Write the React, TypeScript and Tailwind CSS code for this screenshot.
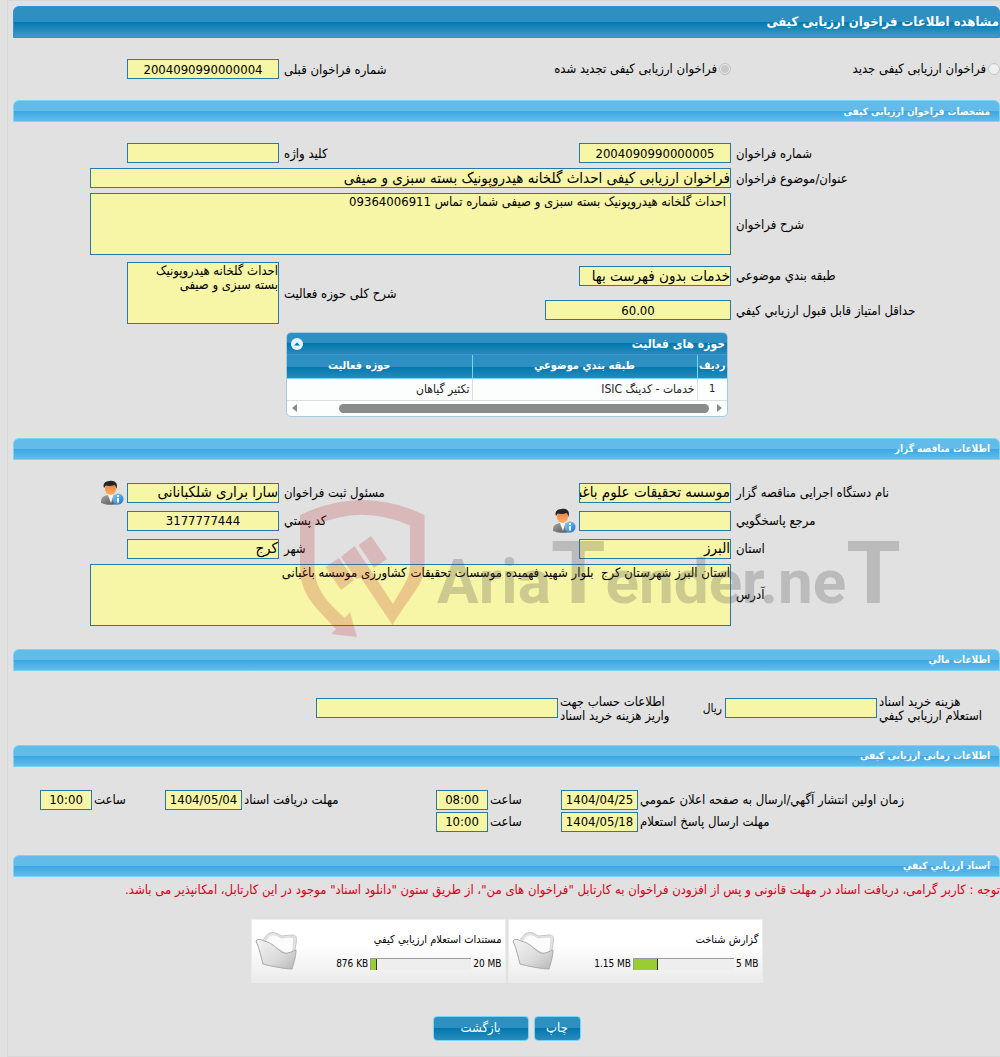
import { useId } from "react";
import type { ReactNode } from "react";

const fieldClass =
  "block border border-[#2779aa] bg-[#f7f5a6] text-black outline-none rounded-none";

const rowClass =
  "grid grid-cols-[269px_152px_minmax(0,1fr)_152px_114px] items-center";

const timeRowClass =
  "grid grid-cols-[362px_77px_73px_52px_minmax(0,1fr)_77px_73px_52px_27px] items-center";

function SectionBar({ title }: { title: string }) {
  return (
    <h2 className="flex h-[22px] items-center rounded-t-md border border-[#77d5f7] bg-[linear-gradient(#63bbea_0%,#63bbea_50%,#39a7e2_50%,#62bcec_100%)] pr-[9px] text-[10px] font-bold text-white">
      {title}
    </h2>
  );
}

function Label({ id, children }: { id: string; children: ReactNode }) {
  return (
    <label htmlFor={id} className="pt-px pl-[5px] text-left text-[13px] leading-[14px] whitespace-nowrap">
      {children}
    </label>
  );
}

function TightLabel({ id, children }: { id: string; children: ReactNode }) {
  return (
    <label htmlFor={id} className="pt-px pl-[2px] text-left text-[13px] leading-[14px] whitespace-nowrap">
      {children}
    </label>
  );
}

function Field({ id, value = "", number }: { id: string; value?: string; number?: boolean }) {
  return (
    <input
      id={id}
      type="text"
      readOnly
      defaultValue={value}
      className={`${fieldClass} h-5 w-full ${number ? "text-center text-[13px]" : "text-right text-[15px]"}`}
    />
  );
}

function Area({ id, value, padded }: { id: string; value: string; padded?: boolean }) {
  return (
    <textarea
      id={id}
      readOnly
      defaultValue={value}
      className={`${fieldClass} h-[62px] w-full resize-none overflow-hidden text-[13px] leading-[14px] ${padded ? "px-1 py-px" : "py-px"}`}
    />
  );
}

function PersonInfoIcon() {
  return (
    <svg width="24" height="26" viewBox="0 0 24 26" aria-hidden="true">
      <defs>
        <linearGradient id="suit" x1="0" y1="0" x2="1" y2="1">
          <stop offset="0" stopColor="#a6a6a6" />
          <stop offset="1" stopColor="#4d4d4d" />
        </linearGradient>
        <linearGradient id="face" x1="0" y1="0" x2="0" y2="1">
          <stop offset="0" stopColor="#f07a35" />
          <stop offset="1" stopColor="#ffb066" />
        </linearGradient>
        <linearGradient id="badge" x1="0" y1="0" x2="1" y2="1">
          <stop offset="0" stopColor="#8fd0f8" />
          <stop offset="1" stopColor="#0f74cf" />
        </linearGradient>
      </defs>
      <path d="M1 23c0-5 1-7 7-8h5c6 1 7 3 7 9-6 1-13 1.500-19-1z" fill="url(#suit)" />
      <path d="M7.500 14l3.500 9 3-9z" fill="#f4f4f4" />
      <ellipse cx="10.500" cy="9" rx="5.500" ry="6" fill="url(#face)" />
      <path d="M4 8C2.500 4 5 1 9.500 1c5-1 9 2 7 8-.5-2-1-3-2-4-3 1.200-6 1.200-8.500.5C5 6.300 5 7 4 8z" fill="#252525" />
      <circle cx="18" cy="19" r="5.500" fill="url(#badge)" />
      <path d="M17 18h2v4.500h-2zM17 15h2v2h-2z" fill="#fff" />
    </svg>
  );
}

function FolderIcon() {
  return (
    <svg width="42" height="40" viewBox="-1 -1 42 40" aria-hidden="true">
      <defs>
        <linearGradient id="folder" x1="0" y1="0" x2="1" y2="1">
          <stop offset="0" stopColor="#f4f4f4" />
          <stop offset="0.600" stopColor="#dadada" />
          <stop offset="1" stopColor="#b5b5b5" />
        </linearGradient>
      </defs>
      <path d="M6 9l6-7c5-3 9-1 13 2l11-1c4 0 5 2 4.500 6L37 28z" fill="#e2e2e2" stroke="#c8c8c8" />
      <path d="M9 9l5-6c5-1 8 1 11 3l11-1 2 2-2 18z" fill="#fbfbfb" stroke="#dcdcdc" />
      <path d="M0 9c2-3 6-1 8 0 10 2 14 10 20 12 4 1 9-2 12-3 0 7-3 15-4 19-7 0-22-3-29-5C5 25 4 18 0 9z" fill="url(#folder)" stroke="#a9a9a9" />
    </svg>
  );
}

function Watermark() {
  return (
    <svg
      className="pointer-events-none absolute top-[60px] left-[287px]"
      width="610"
      height="140"
      viewBox="300 498 610 140"
      direction="ltr"
      aria-hidden="true"
    >
      <g fill="#c0272d" fillOpacity="0.22">
        <path d="M300 515Q362 485 424.500 515V568C424 584 410 596 392.500 625L361 578 356 579 341 557 354.500 546 393 604C400 590 410 580 410 566V525.500Q362 504 314.500 525.500V568C315 592 332 606 345 618L350 612 357 637 331 634 336 629C312 604 301 594 300 568Z" />
        <path d="M358.500 545L371 536 387 559 374 568zM325.500 567L339 558 354 580 341 590z" />
      </g>
      <text
        x="437"
        y="603"
        fill="#4a4a4a"
        fillOpacity="0.25"
        className="font-[Roboto,sans-serif] text-[62px] font-bold"
      >
        Aria<tspan className="text-[88px]">T</tspan>ender.ne<tspan className="text-[88px]">T</tspan>
      </text>
    </svg>
  );
}

function FileCard({ title, max, used, percent }: { title: string; max: string; used: string; percent: number }) {
  return (
    <div className="flex h-16 w-[255px] items-center justify-between border border-[#ececec] bg-[linear-gradient(#ffffff_40%,#ebebeb_100%)] px-[3px]">
      <div className="flex flex-col gap-[10px]">
        <div className="text-[11px] leading-4 text-black">{title}</div>
        <div className="flex items-center gap-[2px] text-[10px] leading-3">
          <span dir="ltr">{max}</span>
          <div dir="ltr" className="h-3 w-[101px] border-t border-l border-[#999] bg-[#eee]">
            <div className="h-full border-r border-[#333] bg-[#9acd32]" style={{ width: `${percent}%` }} />
          </div>
          <span dir="ltr">{used}</span>
        </div>
      </div>
      <FolderIcon />
    </div>
  );
}

const radioClass =
  "size-3 shrink-0 appearance-none rounded-full border border-[#c4c4c4] bg-[#efefef] checked:bg-[#c8c8c8] checked:shadow-[inset_0_0_0_1px_#f0f0f0]";

const glossyButton =
  "h-[25px] rounded-[4px] border border-[#77d5f7] bg-[linear-gradient(#2d90c0_0%,#2d90c0_50%,#0078ae_50%,#2a8cbc_100%)] text-[13px] text-white";

export default function App() {
  const uid = useId();
  const id = (name: string) => `${uid}${name}`;

  return (
    <div dir="rtl" className="min-h-screen overflow-hidden bg-[#e1e1e1] pl-[7px] font-['DejaVu_Sans_Condensed','DejaVu_Sans',sans-serif] text-black">
      <main className="border-y border-l border-[#d8d8d8] pt-[5px] pb-[15px] pl-[5px]">
        <h1 className="flex h-8 items-center rounded-t-md border border-[#2e8fdf] bg-[linear-gradient(#2d90c0_0%,#2d90c0_50%,#0078ae_50%,#429bc8_100%)] text-[13px] font-bold text-white">
          مشاهده اطلاعات فراخوان ارزیابی کیفی
        </h1>

        {/* Call type */}
        <div className={`${rowClass} mt-[21px] mb-[21px]`}>
          <label className="flex items-center gap-[2px] text-[13px] leading-5 whitespace-nowrap">
            <input type="radio" name="kind" disabled className={radioClass} />
            فراخوان ارزیابی کیفی جدید
          </label>
          <label className="flex items-center gap-[2px] text-[13px] leading-5 whitespace-nowrap">
            <input type="radio" name="kind" disabled defaultChecked className={radioClass} />
            فراخوان ارزیابی کیفی تجدید شده
          </label>
          <Label id={id("prev")}>شماره فراخوان قبلی</Label>
          <Field id={id("prev")} value="2004090990000004" number />
        </div>

        <section>
          <SectionBar title="مشخصات فراخوان ارزیابی کیفی" />
          <div className="mt-[21px] flex flex-col gap-[5px]">
            <div className={rowClass}>
              <Label id={id("number")}>شماره فراخوان</Label>
              <Field id={id("number")} value="2004090990000005" number />
              <Label id={id("keyword")}>کلید واژه</Label>
              <Field id={id("keyword")} />
            </div>
            <div className="grid grid-cols-[269px_minmax(0,1fr)_77px] items-center">
              <Label id={id("subject")}>عنوان/موضوع فراخوان</Label>
              <Field id={id("subject")} value="فراخوان ارزیابی کیفی احداث گلخانه هیدروپونیک بسته سبزی و صیفی" />
            </div>
            <div className="grid grid-cols-[269px_minmax(0,1fr)_77px] items-center">
              <Label id={id("desc")}>شرح فراخوان</Label>
              <Area id={id("desc")} value="احداث گلخانه هیدروپونیک بسته سبزی و صیفی شماره تماس 09364006911" padded />
            </div>
          </div>
          <div className="mt-[7px] grid grid-cols-[269px_186px_minmax(0,1fr)_152px_114px] items-center">
            <div className="flex flex-col gap-5">
              <Label id={id("category")}>طبقه بندي موضوعي</Label>
              <Label id={id("score")}>حداقل امتياز قابل قبول ارزيابي کيفي</Label>
            </div>
            <div className="flex flex-col gap-[14px]">
              <div className="w-[152px]">
                <Field id={id("category")} value="خدمات بدون فهرست بها" />
              </div>
              <Field id={id("score")} value="60.00" number />
            </div>
            <Label id={id("scope")}>شرح کلی حوزه فعالیت</Label>
            <Area id={id("scope")} value={"احداث گلخانه هیدروپونیک\nبسته سبزی و صیفی"} />
          </div>

          {/* Activity table */}
          <div className="mt-2 mr-[272px] w-[442px] overflow-hidden rounded-[5px] border border-[#a6c9de] bg-[#fcfdfd]">
            <div className="flex h-[22px] items-center justify-between border-b border-[#4297d7] bg-[linear-gradient(#2d90c0_0%,#2d90c0_50%,#0078ae_50%,#2a88bb_100%)] pr-[2px] pl-1 text-white">
              <span className="text-[12px] font-bold">حوزه های فعالیت</span>
              <button type="button" aria-label="بستن" className="flex size-3 items-center justify-center rounded-full bg-[#e3f1fa]">
                <svg width="8" height="8" viewBox="0 0 8 8" aria-hidden="true">
                  <path d="M1 5.500 4 2.500 7 5.500z" fill="#0078ae" />
                </svg>
              </button>
            </div>
            <table className="w-[480px] table-fixed border-collapse text-[12px]">
              <thead>
                <tr className="h-[23px] bg-[linear-gradient(#2d90c0_0%,#2d90c0_50%,#0078ae_50%,#2a88bb_100%)] text-[11px] text-white">
                  <th className="w-[30px] border-b border-l border-[#77d5f7] p-0">ردیف</th>
                  <th className="w-[225px] border-b border-l border-[#77d5f7] p-0">طبقه بندي موضوعي</th>
                  <th className="w-[225px] border-b border-[#77d5f7] p-0">حوزه فعالیت</th>
                </tr>
              </thead>
              <tbody>
                <tr className="h-[22px] text-[#222]">
                  <td className="border-b border-l border-[#ddd] p-0 text-center text-[11px]">1</td>
                  <td className="border-b border-l border-[#ddd] py-0 pr-[2px]">خدمات - کدینگ ISIC</td>
                  <td className="border-b border-[#ddd] py-0 pr-[2px]">تکثیر گیاهان</td>
                </tr>
              </tbody>
            </table>
            <div className="flex h-[15px] items-center justify-between px-[5px]">
              <div className="size-0 border-y-4 border-l-5 border-y-transparent border-l-[#8b8b8b]" />
              <div className="mr-2 h-[9px] w-[370px] rounded-full bg-[#8b8b8b]" />
              <div className="grow" />
              <div className="size-0 border-y-4 border-r-5 border-y-transparent border-r-[#8b8b8b]" />
            </div>
          </div>
        </section>

        {/* Tender holder */}
        <section className="relative mt-[21px]">
          <SectionBar title="اطلاعات مناقصه گزار" />
          <div className="mt-[23px] flex flex-col gap-2">
            <div className={rowClass}>
              <Label id={id("agency")}>نام دستگاه اجرایی مناقصه گزار</Label>
              <Field id={id("agency")} value="موسسه تحقیقات علوم باغبانی" />
              <Label id={id("registrar")}>مسئول ثبت فراخوان</Label>
              <Field id={id("registrar")} value="سارا براری شلکبانانی" />
              <button type="button" aria-label="اطلاعات مسئول" className="-my-1 mr-[3px] w-6">
                <PersonInfoIcon />
              </button>
            </div>
            <div className={rowClass}>
              <Label id={id("contact")}>مرجع پاسخگويي</Label>
              <Field id={id("contact")} />
              <div className="flex items-center justify-between">
                <button type="button" aria-label="اطلاعات مرجع" className="-my-1 mr-[3px] w-6">
                  <PersonInfoIcon />
                </button>
                <Label id={id("postal")}>کد پستي</Label>
              </div>
              <Field id={id("postal")} value="3177777444" number />
            </div>
            <div className={rowClass}>
              <Label id={id("province")}>استان</Label>
              <Field id={id("province")} value="البرز" />
              <Label id={id("city")}>شهر</Label>
              <Field id={id("city")} value="کرج" />
            </div>
          </div>
          <div className="mt-[5px] grid grid-cols-[269px_minmax(0,1fr)_77px] items-center">
            <Label id={id("address")}>آدرس</Label>
            <Area id={id("address")} value="استان البرز شهرستان کرج  بلوار شهید فهمیده موسسات تحقیقات کشاورزی موسسه باغبانی" />
          </div>
          <Watermark />
        </section>

        {/* Financial */}
        <section className="mt-[23px]">
          <SectionBar title="اطلاعات مالي" />
          <div className="mt-[23px] flex items-center text-[13px]">
            <div className="flex w-[123px] flex-col">
              <TightLabel id={id("cost")}>
                هزینه خرید اسناد
                <br />
                استعلام ارزيابي کيفي
              </TightLabel>
            </div>
            <div className="w-[152px]">
              <Field id={id("cost")} />
            </div>
            <span className="mr-[3px] text-[12px]">ریال</span>
            <div className="mr-auto flex items-center">
              <TightLabel id={id("account")}>
                اطلاعات حساب جهت
                <br />
                واریز هزینه خرید اسناد
              </TightLabel>
              <div className="ml-[303px] w-[242px]">
                <Field id={id("account")} />
              </div>
            </div>
          </div>
        </section>

        {/* Timing */}
        <section className="mt-[22px]">
          <SectionBar title="اطلاعات زمانی ارزیابی کیفی" />
          <div className="mt-[23px] flex flex-col gap-[2px]">
            <div className={timeRowClass}>
              <TightLabel id={id("publish")}>زمان اولین انتشار آگهي/ارسال به صفحه اعلان عمومي</TightLabel>
              <Field id={id("publish")} value="1404/04/25" number />
              <TightLabel id={id("publishTime")}>ساعت</TightLabel>
              <Field id={id("publishTime")} value="08:00" number />
              <TightLabel id={id("receive")}>مهلت دریافت اسناد</TightLabel>
              <Field id={id("receive")} value="1404/05/04" number />
              <TightLabel id={id("receiveTime")}>ساعت</TightLabel>
              <Field id={id("receiveTime")} value="10:00" number />
            </div>
            <div className={timeRowClass}>
              <TightLabel id={id("reply")}>مهلت ارسال پاسخ استعلام</TightLabel>
              <Field id={id("reply")} value="1404/05/18" number />
              <TightLabel id={id("replyTime")}>ساعت</TightLabel>
              <Field id={id("replyTime")} value="10:00" number />
            </div>
          </div>
        </section>

        {/* Documents */}
        <section className="mt-[23px]">
          <SectionBar title="اسناد ارزيابي کيفي" />
          <p className="mt-1 text-[13px] leading-[18px] whitespace-nowrap text-[#d9001b]">
            توجه : کاربر گرامی، دریافت اسناد در مهلت قانونی و پس از افزودن فراخوان به کارتابل "فراخوان های من"، از طریق ستون "دانلود اسناد" موجود در این کارتابل، امکانپذیر می باشد.
          </p>
          <div className="mt-5 flex justify-center gap-[2px]">
            <FileCard title="گزارش شناخت" max="5 MB" used="1.15 MB" percent={24} />
            <FileCard title="مستندات استعلام ارزيابي کيفي" max="20 MB" used="876 KB" percent={6} />
          </div>
          <div className="mt-[33px] flex justify-center gap-[5px]">
            <button type="button" className={`${glossyButton} w-[47px]`}>چاپ</button>
            <button type="button" className={`${glossyButton} w-24`}>بازگشت</button>
          </div>
        </section>
      </main>
    </div>
  );
}
